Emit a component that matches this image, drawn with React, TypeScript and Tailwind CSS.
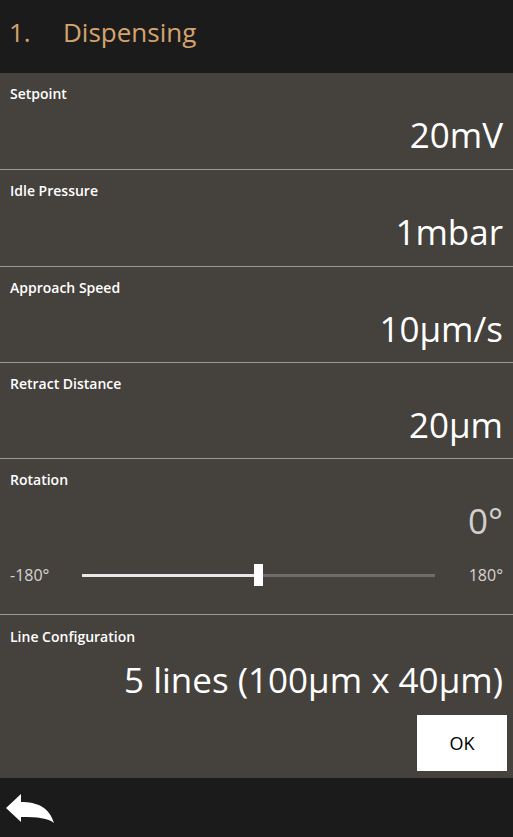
import React from "react";

const font = { fontFamily: '"Open Sans", "Noto Sans", sans-serif' };

interface Field {
  label: string;
  value: string;
  h: string;
}

const fields: Field[] = [
  { label: "Setpoint", value: "20mV", h: "h-[97px]" },
  { label: "Idle Pressure", value: "1mbar", h: "h-[97px]" },
  { label: "Approach Speed", value: "10µm/s", h: "h-[96px]" },
  { label: "Retract Distance", value: "20µm", h: "h-[96px]" },
];

function BackArrow() {
  return (
    <svg width="50" height="34" viewBox="0 0 50 34" fill="white">
      <path d="M1 17 L16 3 L16 11 C32 11 44 16 49 32 C43 27 33 26 16 26 L16 31 Z" />
    </svg>
  );
}

export default function App() {
  return (
    <div className="w-[513px] h-[837px] flex flex-col bg-[#45413d] text-white" style={font}>
      <div className="h-[73px] shrink-0 bg-[#1b1b1b] flex items-start pt-[14px] px-[9px] text-[26px] leading-[36px] text-[#d5a46e]">
        <span className="w-[54px]">1.</span>
        <span>Dispensing</span>
      </div>

      {fields.map((f) => (
        <div key={f.label} className={`${f.h} border-b border-[#9c9a98] flex flex-col px-[10px] pt-[11px]`}>
          <div className="text-[14px] font-semibold leading-[19px]">{f.label}</div>
          <div className="text-right text-[35px] leading-[44px] mt-[10px]">{f.value}</div>
        </div>
      ))}

      <div className="h-[156px] border-b border-[#9c9a98] flex flex-col px-[10px] pt-[11px]">
        <div className="text-[14px] font-semibold leading-[19px]">Rotation</div>
        <div className="text-right text-[35px] leading-[44px] mt-[10px] text-[#d2d0ce]">0°</div>
        <div className="flex items-center mt-[20px] text-[16px] text-[#d6d4d2]">
          <span className="w-[72px]">-180°</span>
          <div className="relative w-[353px] h-[22px] flex items-center">
            <div className="h-[3px] w-[177px] bg-[#e8e8e8]" />
            <div className="h-[3px] flex-1 bg-[#6e6b68]" />
            <div className="absolute left-[172px] top-0 w-[9px] h-[22px] bg-white" />
          </div>
          <span className="flex-1 text-right">180°</span>
        </div>
      </div>

      <div className="flex-1 flex flex-col px-[10px] pt-[12px]">
        <div className="text-[14px] font-semibold leading-[19px]">Line Configuration</div>
        <div className="text-right text-[35px] leading-[46px] mt-[11px]">5 lines (100µm x 40µm)</div>
        <div className="flex justify-end mt-[12px] -mr-[4px]">
          <button className="w-[90px] h-[56px] bg-white text-black text-[18px]">OK</button>
        </div>
      </div>

      <div className="h-[59px] shrink-0 bg-[#1b1b1b] flex items-center px-[5px]">
        <BackArrow />
      </div>
    </div>
  );
}
